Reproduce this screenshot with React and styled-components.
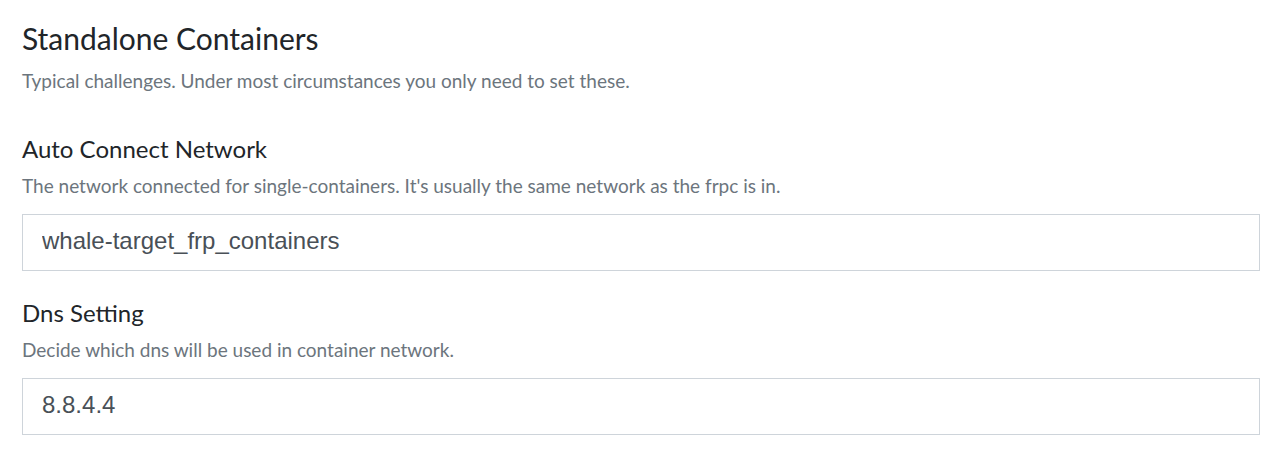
import React from "react";
import styled, { createGlobalStyle } from "styled-components";

const Global = createGlobalStyle`
  html, body { margin: 0; padding: 0; background: #ffffff; }
  body { font-family: Lato, "Open Sans", sans-serif; color: #212529; }
  * { box-sizing: border-box; }
`;

const Page = styled.div`
  padding: 20.4px 14px 0 22px;
  display: flex;
  flex-direction: column;
`;

const Title = styled.h3`
  margin: 0;
  font-family: Lato, sans-serif;
  font-weight: 400;
  font-size: 30px;
  line-height: 1.2;
  color: #212529;
`;

const Description = styled.p`
  margin: ${(p) => p.$mt || 0}px 0 0 0;
  font-family: Lato, sans-serif;
  font-size: 19px;
  line-height: 1.2;
  color: #6c757d;
`;

const Group = styled.div`
  display: flex;
  flex-direction: column;
  margin-top: ${(p) => p.$mt}px;
`;

const Label = styled.label`
  font-family: Lato, sans-serif;
  font-size: 24px;
  line-height: 1.2;
  color: #212529;
`;

const Input = styled.input`
  margin-top: ${(p) => p.$mt || 0}px;
  height: 57px;
  width: 100%;
  padding: 0 19px 3px 19px;
  border: 1px solid #ced4da;
  border-radius: 0;
  background: #fff;
  font-family: "Liberation Sans", Arial, sans-serif;
  font-size: 24px;
  color: #495057;
  outline: none;
`;

export default function App() {
  return (
    <>
      <Global />
      <Page>
        <Title>Standalone Containers</Title>
        <Description $mt={14.1}>
          Typical challenges. Under most circumstances you only need to set these.
        </Description>
        <Group $mt={42}>
          <Label>Auto Connect Network</Label>
          <Description $mt={11.4}>
            The network connected for single-containers. It's usually the same network as the frpc is in.
          </Description>
          <Input $mt={15.7} defaultValue="whale-target_frp_containers" />
        </Group>
        <Group $mt={27.6}>
          <Label>Dns Setting</Label>
          <Description $mt={12.1}>
            Decide which dns will be used in container network.
          </Description>
          <Input $mt={15.4} defaultValue="8.8.4.4" />
        </Group>
      </Page>
    </>
  );
}
